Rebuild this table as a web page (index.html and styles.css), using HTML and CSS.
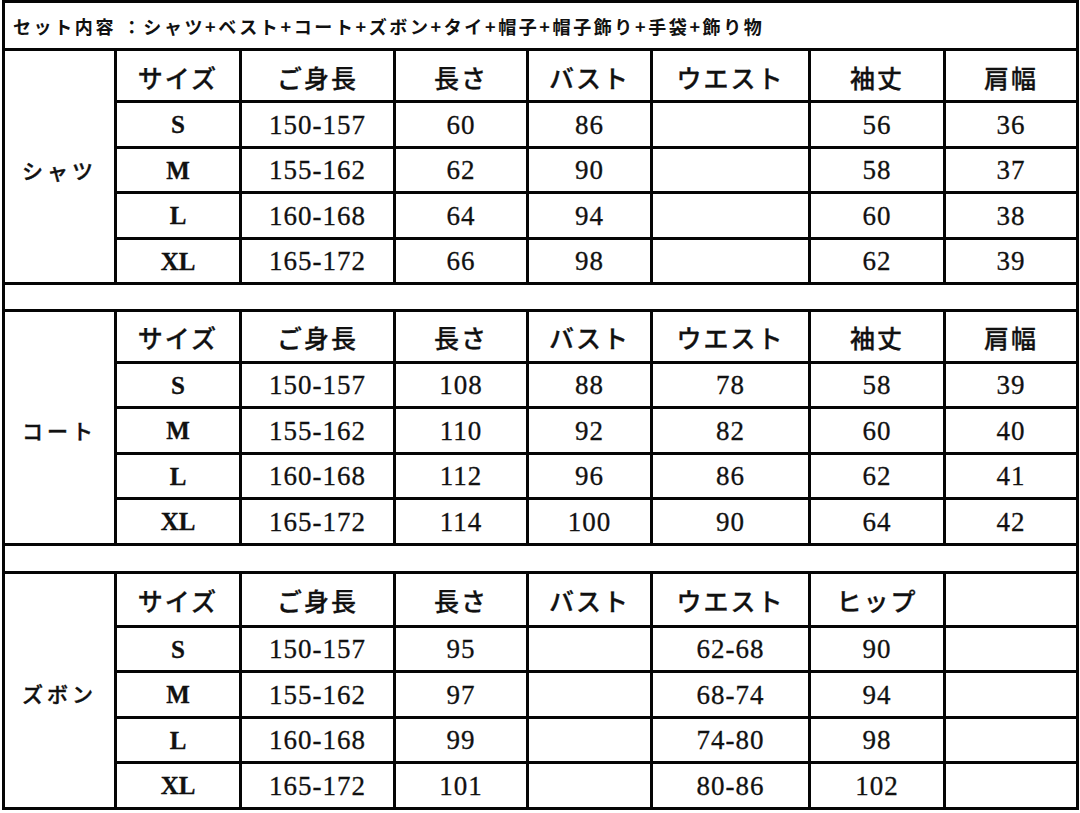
FILE: index.html
```html
<!DOCTYPE html>
<html lang="ja">
<head>
<meta charset="utf-8">
<title>サイズ表</title>
<link rel="stylesheet" href="styles.css">
</head>
<body>
<table class="chart">
  <colgroup>
    <col class="c-group"><col class="c-size"><col class="c-height"><col class="c-len"><col class="c-bust"><col class="c-waist"><col class="c-sleeve"><col class="c-shoulder">
  </colgroup>
  <tbody>
    <tr class="row-title"><td class="title" colspan="8">セット内容 ：シャツ+ベスト+コート+ズボン+タイ+帽子+帽子飾り+手袋+飾り物</td></tr>

    <tr class="row-head">
      <td class="group" rowspan="5">シャツ</td>
      <th>サイズ</th><th>ご身長</th><th>長さ</th><th>バスト</th><th>ウエスト</th><th>袖丈</th><th>肩幅</th>
    </tr>
    <tr class="row-data"><td class="sz">S</td><td>150-157</td><td>60</td><td>86</td><td></td><td>56</td><td>36</td></tr>
    <tr class="row-data"><td class="sz">M</td><td>155-162</td><td>62</td><td>90</td><td></td><td>58</td><td>37</td></tr>
    <tr class="row-data"><td class="sz">L</td><td>160-168</td><td>64</td><td>94</td><td></td><td>60</td><td>38</td></tr>
    <tr class="row-data"><td class="sz">XL</td><td>165-172</td><td>66</td><td>98</td><td></td><td>62</td><td>39</td></tr>

    <tr class="row-sep"><td colspan="8"></td></tr>

    <tr class="row-head">
      <td class="group" rowspan="5">コート</td>
      <th>サイズ</th><th>ご身長</th><th>長さ</th><th>バスト</th><th>ウエスト</th><th>袖丈</th><th>肩幅</th>
    </tr>
    <tr class="row-data"><td class="sz">S</td><td>150-157</td><td>108</td><td>88</td><td>78</td><td>58</td><td>39</td></tr>
    <tr class="row-data"><td class="sz">M</td><td>155-162</td><td>110</td><td>92</td><td>82</td><td>60</td><td>40</td></tr>
    <tr class="row-data"><td class="sz">L</td><td>160-168</td><td>112</td><td>96</td><td>86</td><td>62</td><td>41</td></tr>
    <tr class="row-data"><td class="sz">XL</td><td>165-172</td><td>114</td><td>100</td><td>90</td><td>64</td><td>42</td></tr>

    <tr class="row-sep row-sep2"><td colspan="8"></td></tr>

    <tr class="row-head row-head3">
      <td class="group" rowspan="5">ズボン</td>
      <th>サイズ</th><th>ご身長</th><th>長さ</th><th>バスト</th><th>ウエスト</th><th>ヒップ</th><th></th>
    </tr>
    <tr class="row-data"><td class="sz">S</td><td>150-157</td><td>95</td><td></td><td>62-68</td><td>90</td><td></td></tr>
    <tr class="row-data"><td class="sz">M</td><td>155-162</td><td>97</td><td></td><td>68-74</td><td>94</td><td></td></tr>
    <tr class="row-data"><td class="sz">L</td><td>160-168</td><td>99</td><td></td><td>74-80</td><td>98</td><td></td></tr>
    <tr class="row-data"><td class="sz">XL</td><td>165-172</td><td>101</td><td></td><td>80-86</td><td>102</td><td></td></tr>
  </tbody>
</table>
</body>
</html>
```

FILE: styles.css
```css
html, body {
  margin: 0;
  padding: 0;
  background: #ffffff;
}

body {
  color: #111111;
  font-family: "Liberation Serif", "Noto Sans CJK JP", serif;
}

.chart {
  table-layout: fixed;
  border-collapse: collapse;
  width: 1077px;
  margin: 0 0 0 2px;
  border: 3px solid #050505;
}

.chart td,
.chart th {
  border: 3px solid #050505;
  padding: 0;
  text-align: center;
  vertical-align: middle;
  font-weight: normal;
}

.c-group { width: 112px; }
.c-size { width: 125px; }
.c-height { width: 154px; }
.c-len { width: 133px; }
.c-bust { width: 124px; }
.c-waist { width: 158px; }
.c-sleeve { width: 135px; }
.c-shoulder { width: 133px; }

.row-title { height: 48px; }
.row-head { height: 52px; }
.row-head3 { height: 54px; }
.row-data { height: 45.5px; }
.row-sep { height: 26.5px; }
.row-sep2 { height: 28px; }

.chart td.title {
  text-align: left;
  padding-left: 8px;
  font-family: "Noto Sans CJK JP", sans-serif;
  font-weight: 700;
  font-size: 18px;
  letter-spacing: 2.6px;
  white-space: nowrap;
}

.chart th {
  font-family: "Noto Sans CJK JP", sans-serif;
  font-weight: 500;
  font-size: 25px;
  letter-spacing: 2px;
  padding-top: 2px;
  -webkit-text-stroke: 0.3px #111111;
}

.chart td.group {
  font-family: "Noto Sans CJK JP", sans-serif;
  font-weight: 500;
  font-size: 21px;
  letter-spacing: 4px;
  padding-top: 6px;
  -webkit-text-stroke: 0.4px #111111;
}

.row-data td {
  font-size: 27px;
  letter-spacing: 1px;
  -webkit-text-stroke: 0.3px #111111;
  padding-top: 2px;
}

.row-data td.sz {
  font-weight: 700;
  font-size: 25px;
  letter-spacing: 0;
}
```
